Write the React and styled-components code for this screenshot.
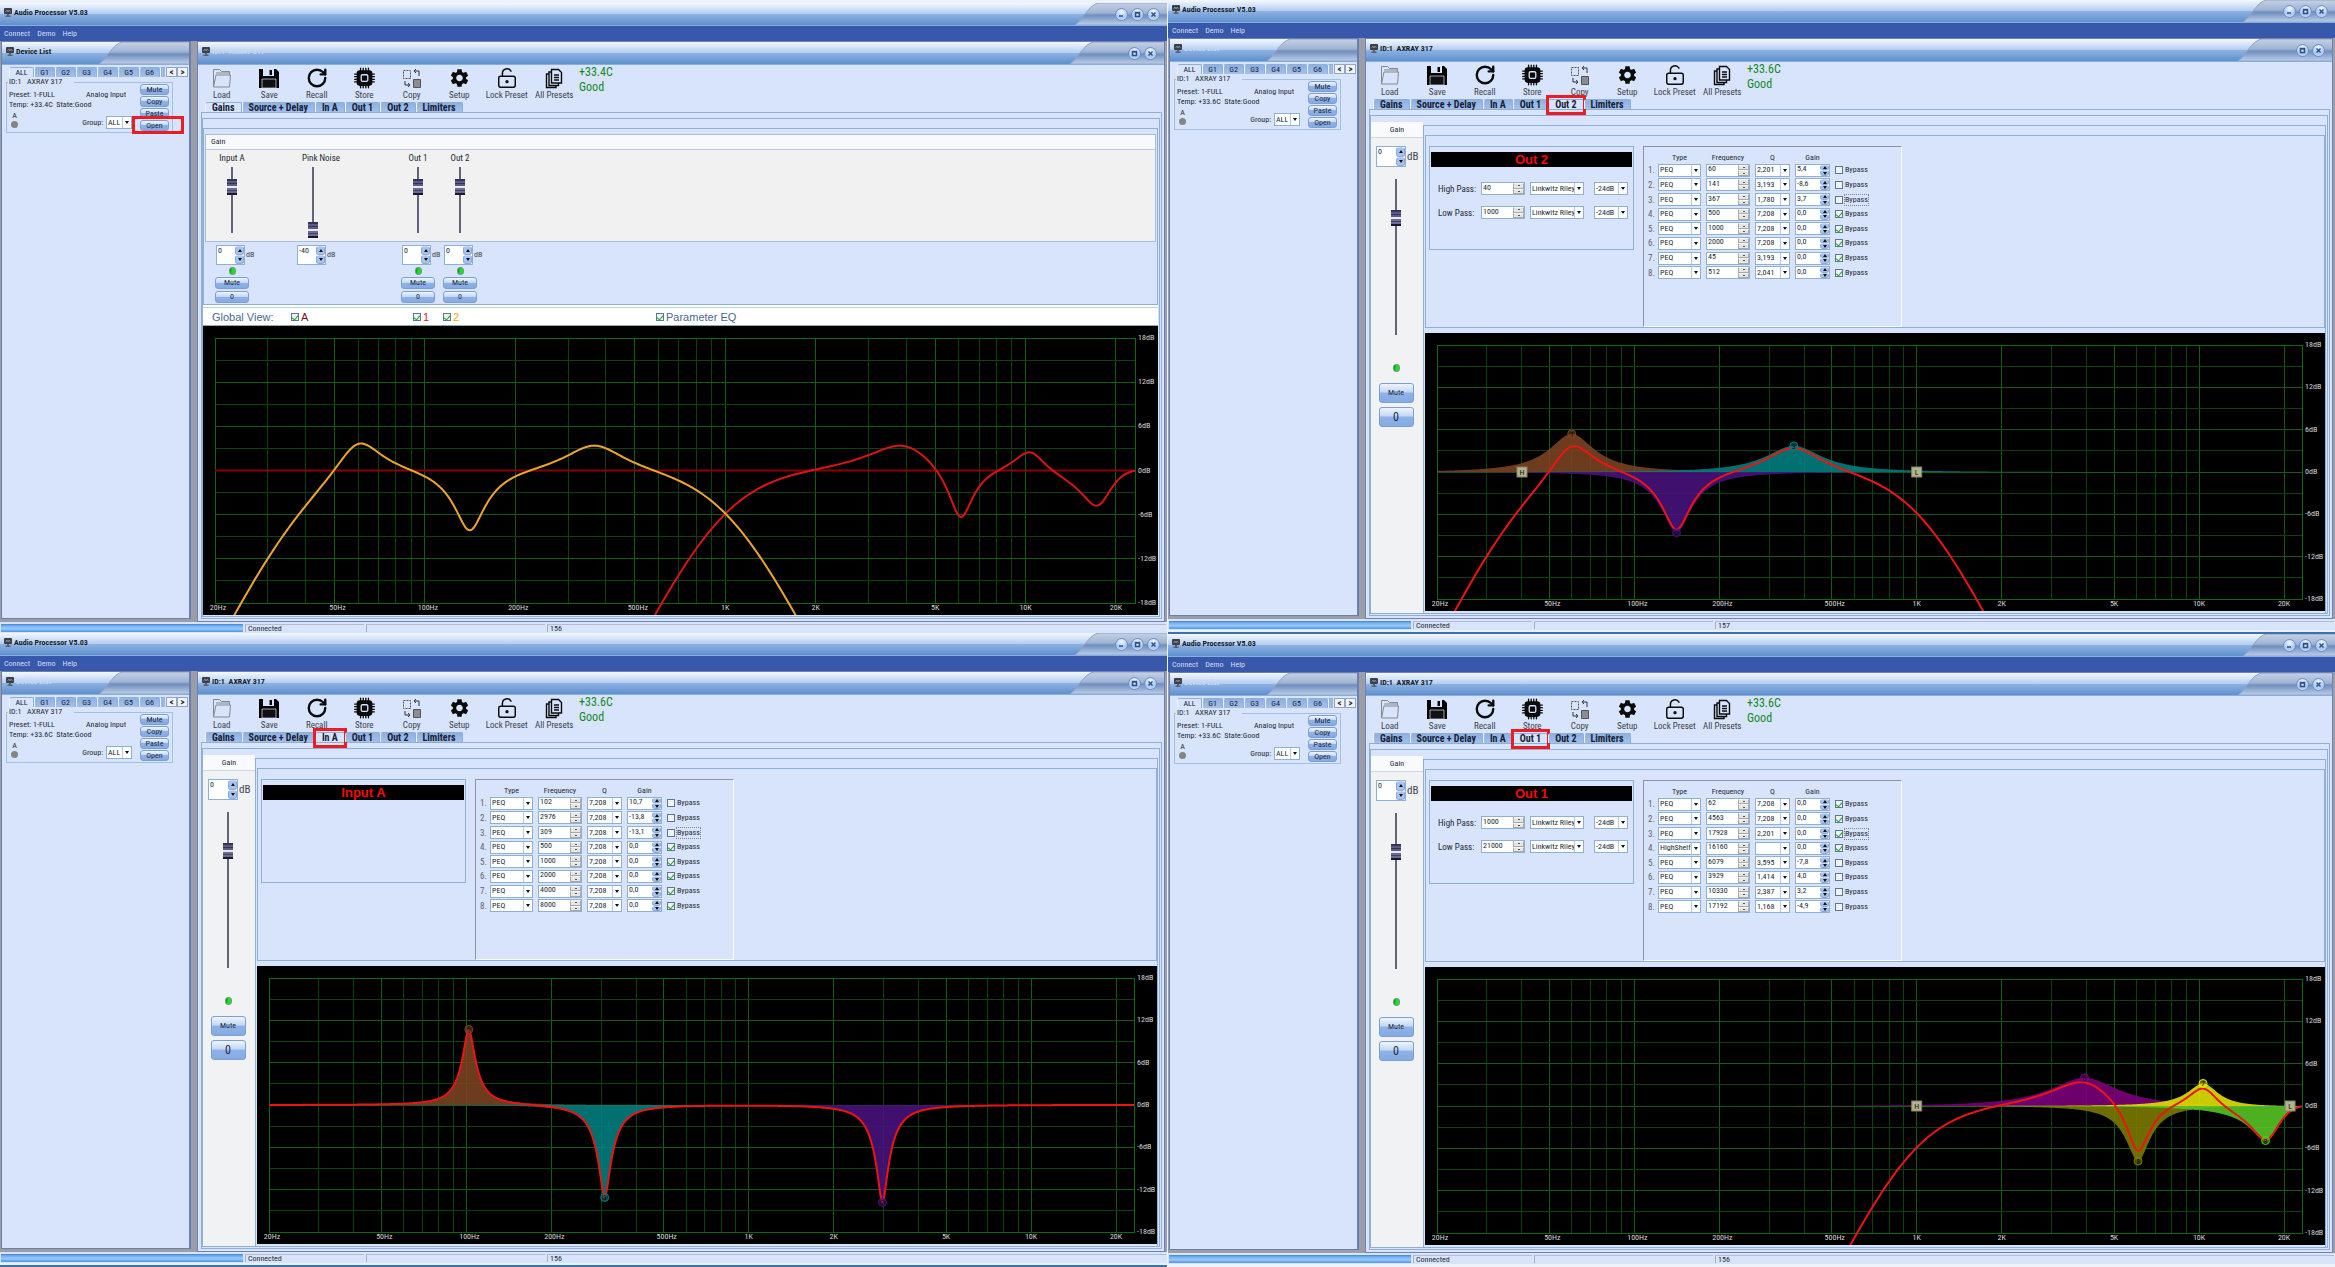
import React from 'react';
import styled, { createGlobalStyle, css } from 'styled-components';
import { LockKeyholeOpen, RotateCw } from 'lucide-react';
import { BsCpuFill } from 'react-icons/bs';
import { MdSettings } from 'react-icons/md';

const GlobalStyle = createGlobalStyle`
  * {
    box-sizing: border-box;
  }

  body {
    margin: 0;
    background: #eef3fb;
    color: #232a35;
    font-family: 'Roboto Condensed', Roboto, 'Liberation Sans', sans-serif;
    font-size: 8px;
    line-height: 10px;
  }

  button,
  input,
  select {
    margin: 0;
    padding: 0;
    color: inherit;
    font: inherit;
  }
`;

const line = '#8fb0d2';
const panel = '#d8e4fb';

/* ---------- window chrome ---------- */

const StyledDesk = styled.main`
  display: grid;
  grid-template-columns: minmax(0, 1fr) minmax(0, 1fr);
  gap: 1px;
`;
const StyledColumn = styled.div`
  padding-top: ${({ $top }) => $top}px;
`;
const StyledWindow = styled.section`
  background: #d3dff6;
`;
const StyledSeam = styled.div`
  height: 4px;
  border-bottom: 2px solid #3f6fae;
  background: #e9f1fb;
`;
const StyledCaption = styled.header`
  display: flex;
  align-items: center;
  height: 23px;
  padding-left: 4px;
  overflow: hidden;
  border-bottom: 1px solid #88aee0;
  background: linear-gradient(#f3f8fe 0%, #dbe8f9 20%, #b4cdf0 48%, #8db1e2 52%, #5f90cd 100%);

  h1,
  h2 {
    flex: 1;
    margin: 0 0 3px 2px;
    color: ${({ $faded }) => ($faded ? '#c6d7ef' : '#141c28')};
    font-size: 8px;
    font-weight: bold;
    white-space: pre;
  }
  > svg {
    flex: none;
    margin-bottom: 4px;
  }
`;
const StyledTail = styled.div`
  display: grid;
  flex: none;
  width: ${({ $width }) => $width}px;
  height: 22px;

  > * {
    grid-area: 1 / 1;
  }
`;
const StyledCaptionButtons = styled.div`
  display: flex;
  align-items: center;
  justify-content: flex-end;
  gap: 3px;
  padding-right: 7px;
`;
const StyledOrb = styled.button`
  display: flex;
  width: 13px;
  height: 13px;
  border: 1px solid #6e8fc8;
  border-radius: 50%;
  background: radial-gradient(circle at 50% 25%, #f2f8ff, #a9c8f2 60%, #d5e6fb);
`;
const StyledMenu = styled.nav`
  display: flex;
  align-items: center;
  gap: 7px;
  height: 15px;
  padding-left: 4px;
  background: #3859ab;

  a {
    color: #d3dbf1;
    font-size: 8px;
    text-decoration: none;
  }
`;
const StyledBody = styled.div`
  display: flex;
  gap: 6px;
  height: 581px;
  padding: 0 2px 0 1px;
  background: #9b9ea6;
`;
const StyledDeviceList = styled.aside`
  flex: 0 0 190px;
  height: 578px;
  border: 1px solid #6b7fae;
  border-right-width: 2px;
  background: ${panel};
`;
const StyledChild = styled.section`
  display: flex;
  flex: 1;
  flex-direction: column;
  min-width: 0;
  border: 1px solid #6f80bd;
  background: ${panel};
`;
const StyledStatus = styled.footer`
  display: flex;
  gap: 2px;
  height: 11px;
  padding: 2px 1px 1px;
  background: ${panel};

  span {
    padding-left: 2px;
    border-top: 1px solid #b6bdca;
    border-left: 1px solid #a9b1c0;
    line-height: 8px;
  }
  span:nth-of-type(1) {
    width: 119px;
  }
  span:nth-of-type(2) {
    width: 179px;
  }
  span:nth-of-type(3) {
    flex: 1;
  }
`;
const StyledProgress = styled.div`
  width: 242px;
  background: linear-gradient(#4a80c8 0%, #6fb2f4 25%, #9acbfb 60%, #4b92e6 100%);
`;

/* ---------- shared controls ---------- */

const StyledButton = styled.button`
  display: block;
  width: ${({ $width }) => $width}px;
  height: ${({ $height }) => $height}px;
  border: 1px solid #7d9fd6;
  border-radius: 3px;
  background: linear-gradient(#eef5fe, #c2d8f6 45%, #8fb2e6 50%, #85abe2 100%);
  color: #1d2a45;
  font-size: ${({ $big }) => ($big ? 12 : 8)}px;
  line-height: 1;
`;
const StyledTabs = styled.div`
  display: flex;
  align-items: flex-end;
  height: ${({ $height }) => $height}px;
  padding-left: 7px;
`;
const StyledTabSlot = styled.div`
  position: relative;
`;
const StyledTab = styled.button`
  display: block;
  height: 10px;
  padding: 0 6px;
  border: 1px solid ${line};
  border-bottom: 0;
  border-left-color: #eaf2fd;
  border-radius: 3px 2px 0 0;
  background: ${({ $active }) => ($active ? panel : 'linear-gradient(#8db0e2, #a4c0ea)')};
  color: #152036;
  font-size: ${({ $small }) => ($small ? 8 : 10)}px;
  font-weight: ${({ $small }) => ($small ? 'normal' : 'bold')};
  line-height: 9px;
  white-space: nowrap;

  ${({ $small, $active }) =>
    $small &&
    css`
      width: ${$active ? 25 : 21}px;
      padding: 0;
    `}
`;
const StyledTabStub = styled.i`
  width: 5px;
  height: 10px;
  border-top: 1px solid ${line};
  border-left: 1px solid #eaf2fd;
  background: #98b8e6;
`;
const StyledMark = styled.span`
  position: absolute;
  inset: ${({ $inset }) => $inset};
  border: 3px solid #ed1c24;
  pointer-events: none;
`;
const StyledSelect = styled.span`
  display: flex;
  width: ${({ $width }) => $width}px;
  height: 13px;
  border: 1px solid ${line};
  background: #fff;

  select {
    flex: 1;
    min-width: 0;
    padding-left: 1px;
    border: 0;
    background: none;
    appearance: none;
  }
`;
const StyledArrowCell = styled.span`
  display: flex;
  flex: none;
  align-items: center;
  justify-content: center;
  width: 9px;
  border-left: 1px solid #b5cbe2;
  font-size: 0;
`;
const StyledTriangle = styled.i`
  border: 2px solid transparent;
  border-top: ${({ $up }) => ($up ? 0 : '3px solid #111')};
  border-bottom: ${({ $up }) => ($up ? '3px solid #111' : 0)};
`;
const StyledSpin = styled.span`
  display: flex;
  width: ${({ $width }) => $width}px;
  height: ${({ $height }) => $height}px;
  border: 1px solid ${line};
  background: #fff;

  input {
    flex: 1;
    min-width: 0;
    height: 9px;
    padding-left: 1px;
    border: 0;
    outline: 0;
    background: none;
  }
`;
const StyledSteps = styled.span`
  display: flex;
  flex: none;
  flex-direction: column;
  width: ${({ $grey }) => ($grey ? 11 : 9)}px;

  button {
    display: flex;
    flex: 1;
    align-items: center;
    justify-content: center;
    min-height: 0;
    border: 1px solid ${({ $grey }) => ($grey ? '#a8a8a8' : '#8aaadb')};
    border-top-color: ${({ $grey }) => ($grey ? '#f6f6f6' : '#c4d8f4')};
    border-radius: ${({ $grey }) => ($grey ? 0 : 3)}px;
    background: ${({ $grey }) => ($grey ? '#e6e6e4' : '#a9c5ef')};
    overflow: hidden;
  }
  i {
    ${({ $grey }) =>
      $grey &&
      css`
        border-width: 1px;
        border-color: #555;
      `}
  }
`;
const StyledCheck = styled.label`
  display: flex;
  align-items: center;
  gap: 2px;
  color: ${({ $color }) => $color || 'inherit'};
  font-family: ${({ $big }) => ($big ? "'Liberation Sans', sans-serif" : 'inherit')};
  font-size: ${({ $big }) => ($big ? 11 : 8)}px;

  span {
    outline: ${({ $focus }) => ($focus ? '1px dotted #7c8698' : 'none')};
  }
  input {
    display: flex;
    align-items: center;
    justify-content: center;
    width: 8px;
    height: 8px;
    border: 1px solid #55789e;
    background: #f3f4f1;
    appearance: none;
  }
  input:checked::after {
    content: '';
    width: 3px;
    height: 5px;
    border: solid #21a121;
    border-width: 0 1px 1px 0;
    transform: rotate(40deg);
  }
`;
const StyledFader = styled.input`
  width: 10px;
  height: ${({ $height }) => $height}px;
  background: linear-gradient(#646478, #646478) center top / 2px calc(100% - 5px) no-repeat;
  appearance: none;
  direction: rtl;
  writing-mode: vertical-lr;

  &::-webkit-slider-runnable-track {
    width: 10px;
    background: none;
  }
  &::-webkit-slider-thumb {
    width: 10px;
    height: 16px;
    background: linear-gradient(
      #34345a 0 2px,
      #5c5c84 2px 4px,
      #34345a 4px 5px,
      #5c5c84 5px 7px,
      #e8e8f0 7px 9px,
      #6c6c90 9px 11px,
      #43436a 11px 12px,
      #6c6c90 12px 14px,
      #17172e 14px 16px
    );
    appearance: none;
  }
`;
const StyledLed = styled.i`
  width: 7px;
  height: 8px;
  border: 1px solid #7f957f;
  border-radius: 3px;
  background: linear-gradient(100deg, #0c7a1a, #14e428 45%);
`;

/* ---------- device list ---------- */

const StyledArrows = styled.div`
  display: flex;
  margin: 0 1px 0 auto;

  button {
    width: 11px;
    height: 10px;
    border: 1px solid #93a5c2;
    background: #f1f3f7;
    font-size: 9px;
    font-weight: bold;
    line-height: 6px;
  }
`;
const StyledDevice = styled.fieldset`
  display: block;
  width: 167px;
  margin: 3px 0 0 4px;
  padding: 0;
  border: 1px solid #a3c0df;

  legend {
    margin-left: 1px;
    padding: 0 12px 0 1px;
    line-height: 4px;
    white-space: pre;
  }
`;
const StyledDeviceGrid = styled.div`
  display: grid;
  grid-template-columns: 1fr 29px;
  column-gap: 14px;
  height: 48px;
  padding: 0 3px 0 2px;
`;
const StyledDeviceInfo = styled.div`
  padding-top: 6px;
  white-space: nowrap;
`;
const StyledSpread = styled.div`
  display: flex;
  justify-content: space-between;
`;
const StyledGroupRow = styled.div`
  display: flex;
  align-items: flex-start;
  justify-content: space-between;
  margin-right: -6px;

  label {
    display: flex;
    align-items: center;
    gap: 3px;
    padding-top: 6px;
  }
`;
const StyledInput = styled.span`
  display: flex;
  flex-direction: column;
  align-items: center;
  padding: 1px 0 0 2px;

  i {
    width: 7px;
    height: 7px;
    border-radius: 50%;
    background: #858585;
  }
`;
const StyledDeviceButtons = styled.div`
  display: flex;
  flex-direction: column;
  gap: 1px;
`;

/* ---------- main panel ---------- */

const StyledToolbar = styled.div`
  display: flex;
  height: 38px;
`;
const StyledTools = styled.div`
  display: grid;
  grid-template-columns: repeat(8, minmax(0, 1fr));
  width: 380px;
`;
const StyledTool = styled.button`
  display: flex;
  flex-direction: column;
  align-items: center;
  padding-top: 2px;
  border: 0;
  background: none;
  color: #3b414b;
  font-size: 9px;
  line-height: 12px;
  white-space: nowrap;

  svg {
    flex: none;
    height: 22px;
    color: #0b0b0b;
  }
`;
const StyledHealth = styled.div`
  padding-left: 1px;
  color: #128a1e;
  font-size: 12px;
  line-height: 15px;
`;
const StyledOuterFrame = styled.div`
  flex: 1;
  margin: 0 2px 2px 3px;
  padding: 5px 1px 1px 0;
  border: 1px solid ${line};
`;
const StyledInnerFrame = styled.div`
  height: 100%;
  padding-right: 1px;
  border: 1px solid ${line};
`;
const StyledGainBoard = styled.div`
  height: 177px;
  margin-top: 9px;
  padding: 5px 1px 0;
  border: 1px solid ${line};
`;
const StyledFaderBed = styled.div`
  height: 108px;
  border: 1px solid #a8bdd8;
  background: #f1f1f1;

  h3 {
    height: 15px;
    margin: 0;
    padding-left: 5px;
    border-bottom: 1px solid #bccbe0;
    background: #f7f9fc;
    font-size: 8px;
    font-weight: normal;
    line-height: 14px;
  }
`;
const StyledStrips = styled.div`
  display: grid;
  grid-template-columns: 42px 39px 42px 63px 42px 42px;
  padding: ${({ $pad }) => $pad};
`;
const StyledStrip = styled.div`
  display: flex;
  grid-column: ${({ $column }) => $column};
  flex-direction: column;
  align-items: center;
`;
const StyledStripLabel = styled.label`
  width: ${({ $width }) => $width}px;
  height: 14px;
  align-self: flex-start;
  font-size: 9px;
  text-align: center;
`;
const StyledLevel = styled.label`
  display: flex;
  align-items: center;
  align-self: stretch;
  gap: 1px;
  padding-left: 5px;

  > em {
    color: #3f4650;
    font-size: ${({ $big }) => ($big ? 11 : 8)}px;
    font-style: normal;
  }
`;
const StyledLedRow = styled.div`
  display: flex;
  align-items: center;
  height: 12px;
`;
const StyledMuteStack = styled.div`
  display: flex;
  flex-direction: column;
  gap: 2px;
`;
const StyledViewBar = styled.div`
  display: grid;
  grid-template-columns: 79px 122px 30px 213px auto;
  align-items: center;
  height: 21px;
  padding: 3px 0 0 9px;
  border-bottom: 1px solid #94a8b8;
  background: linear-gradient(#fff 2px, #b9d2e4 2px 3px, #fff 3px);
  color: #4a6890;
  font-family: 'Liberation Sans', sans-serif;
  font-size: 11px;
`;
const StyledChannel = styled.div`
  display: flex;
  height: 100%;
`;
const StyledGainColumn = styled.div`
  display: flex;
  flex: 0 0 52px;
  flex-direction: column;
  align-items: center;
  margin-top: 6px;
  padding-right: 2px;
  background: #f1f2f4;

  h3 {
    align-self: stretch;
    height: 16px;
    margin: 0 -2px 8px 0;
    border-bottom: 1px solid #ccd6e4;
    background: #f9fafd;
    font-size: 8px;
    font-weight: normal;
    line-height: 15px;
    text-align: center;
  }
`;
const StyledGainButtons = styled.div`
  display: flex;
  flex-direction: column;
  gap: 4px;
  padding-top: 11px;
`;
const StyledEqSide = styled.div`
  display: flex;
  flex: 1;
  flex-direction: column;
  min-width: 0;
  margin-top: 9px;
  padding: 9px 0 0 1px;
  border: 1px solid ${line};
  border-bottom: 0;
`;
const StyledEqFrame = styled.div`
  display: flex;
  align-items: flex-start;
  gap: 9px;
  height: 193px;
  margin-bottom: 5px;
  padding: 10px 3px 0;
  border: 1px solid ${line};
`;
const StyledFilterBox = styled.div`
  width: 205px;
  height: 104px;
  padding: 5px 1px;
  border: 1px solid ${line};

  h3 {
    margin: 0 0 15px;
    background: #000;
    color: #f50808;
    font-family: 'Liberation Sans', sans-serif;
    font-size: 13px;
    font-weight: bold;
    line-height: 15px;
    text-align: center;
  }
`;
const StyledFilterRow = styled.div`
  display: grid;
  grid-template-columns: 43px 49px 64px 34px;
  align-items: center;
  margin-bottom: 11px;
  padding-left: 7px;
  font-size: 9px;
  white-space: nowrap;

  > span {
    font-size: 8px;
  }
`;
const StyledBandBox = styled.div`
  width: 259px;
  height: 181px;
  padding: 5px 0 0 4px;
  border: 1px solid #fbfcfe;
  border-top-color: #8b94a3;
  border-left-color: #8b94a3;
`;
const StyledBands = styled.table`
  height: 128px;
  border-collapse: collapse;

  th {
    height: 11px;
    font-weight: normal;
  }
  td,
  th {
    padding: 0 5px 0 0;
  }
  td:first-child {
    width: 10px;
    padding: 0;
    color: #5b6472;
    font-size: 9px;
  }
`;

/* ---------- chart ---------- */

const StyledChart = styled.div`
  height: ${({ $height }) => $height}px;
  padding: 12px 23px 12px 12px;
  overflow: hidden;
  background: #000;

  svg {
    display: block;
    overflow: visible;
  }
  text {
    fill: #d8d8d8;
    font-size: 8px;
  }
  .tag {
    fill: #101010;
    text-anchor: middle;
  }
`;

const SAMPLE_RATE = 48000;
const F_MIN = 20;
const F_MAX = 23150;
const SPAN = Math.log10(F_MAX / F_MIN);

const toX = f => Math.log10(f / F_MIN) / SPAN;
const pctX = f => `${(toX(f) * 100).toFixed(3)}%`;
const pctY = db => `${((18 - db) / 36) * 100}%`;
const warp = f => Math.tan((Math.PI * f) / SAMPLE_RATE);

const peak = ({ freq, q, gain }) => f => {
  const ratio = warp(f) / warp(freq);
  const a = 10 ** (gain / 40);
  const w = (ratio - 1 / ratio) ** 2;
  return 10 * Math.log10((w + (a / q) ** 2) / (w + (1 / (a * q)) ** 2));
};

// Linkwitz-Riley, 24 dB per octave
const highPass = cut => f => -20 * Math.log10(1 + (cut / f) ** 4);
const lowPass = cut => f => -20 * Math.log10(1 + (f / cut) ** 4);

const STEPS = 900;
const frequencies = Array.from({ length: STEPS + 1 }, (_, i) => F_MIN * 10 ** ((SPAN * i) / STEPS));

const tracePath = parts =>
  frequencies
    .map((f, i) => {
      const db = parts.reduce((sum, part) => sum + part(f), 0);
      const y = 180 - Math.max(db, -60) * 10;
      return `${i ? 'L' : 'M'}${((i / STEPS) * 1000).toFixed(2)} ${y.toFixed(2)}`;
    })
    .join('');

const gridFrequencies = [10, 100, 1000, 10000]
  .flatMap(decade => [1, 2, 3, 4, 5, 6, 7, 8, 9].map(n => n * decade))
  .filter(f => f >= F_MIN && f <= 20000);
const namedFrequencies = [
  [20, '20Hz'],
  [50, '50Hz'],
  [100, '100Hz'],
  [200, '200Hz'],
  [500, '500Hz'],
  [1000, '1K'],
  [2000, '2K'],
  [5000, '5K'],
  [10000, '10K'],
  [20000, '20K'],
];
const levels = [18, 15, 12, 9, 6, 3, 0, -3, -6, -9, -12, -15, -18];

const Chart = ({ height, traces, fills = [], cuts = [] }) => (
  <StyledChart $height={height}>
    <svg width="100%" height="100%">
      <g shapeRendering="crispEdges">
        {gridFrequencies.map(f => (
          <line key={f} x1={pctX(f)} x2={pctX(f)} y1="0" y2="100%" stroke={namedFrequencies.some(([n]) => n === f) ? '#145c18' : '#0e4010'} />
        ))}
        {levels.map(db => (
          <line key={db} x1="0" x2="100%" y1={pctY(db)} y2={pctY(db)} stroke={db % 6 ? '#0f4212' : '#145c18'} />
        ))}
        <rect width="100%" height="100%" fill="none" stroke="#0c6a12" />
      </g>
      <svg viewBox="0 0 1000 360" width="100%" height="100%" preserveAspectRatio="none">
        {fills.map(({ band, color }) => (
          <path key={band.id} d={`${tracePath([peak(band)])}L1000 180L0 180Z`} fill={color} fillOpacity="0.88" />
        ))}
        {traces.map(({ parts, color, width = 2 }) => (
          <path key={color} d={tracePath(parts)} fill="none" stroke={color} strokeWidth={width} vectorEffect="non-scaling-stroke" />
        ))}
      </svg>
      {fills.map(({ band, color }) => (
        <g key={band.id}>
          <circle cx={pctX(band.freq)} cy={pctY(band.gain)} r="4" fill={color} fillOpacity="0.5" stroke={color} />
          <text className="tag" x={pctX(band.freq)} y={pctY(band.gain)} dy="3">
            {band.id}
          </text>
        </g>
      ))}
      {cuts.map(([f, name]) => (
        <g key={name}>
          <svg x={pctX(f)} y="50%">
            <rect x="-5" y="-5" width="10" height="10" fill="#b4b48c" stroke="#84846a" />
          </svg>
          <text className="tag" x={pctX(f)} y="50%" dy="3">
            {name}
          </text>
        </g>
      ))}
      {namedFrequencies.map(([f, name]) => (
        <text key={name} x={pctX(f)} y="100%" dx={f < 1000 ? 3 : 0} dy="7" textAnchor="middle">
          {name}
        </text>
      ))}
      {levels
        .filter(db => db % 6 === 0)
        .map(db => (
          <text key={db} x="100%" y={pctY(db)} dx="3" dy="2">
            {db}dB
          </text>
        ))}
    </svg>
  </StyledChart>
);

/* ---------- data ---------- */

const makeBands = rows =>
  rows.map(([freq, q, gain, bypass, type = 'PEQ'], i) => ({ id: i + 1, type, freq, q, gain, bypass }));

const inputA = {
  name: 'Input A',
  bands: makeBands([
    [102, 7.208, 10.7, false],
    [2976, 7.208, -13.8, false],
    [309, 7.208, -13.1, false],
    [500, 7.208, 0, true],
    [1000, 7.208, 0, true],
    [2000, 7.208, 0, true],
    [4000, 7.208, 0, true],
    [8000, 7.208, 0, true],
  ]),
};
const out1 = {
  name: 'Out 1',
  high: 1000,
  low: 21000,
  bands: makeBands([
    [62, 7.208, 0, true],
    [4563, 7.208, 0, true],
    [17928, 2.201, 0, true],
    [16160, null, 0, true, 'HighShelf'],
    [6079, 3.595, -7.8, false],
    [3929, 1.414, 4, false],
    [10330, 2.387, 3.2, false],
    [17192, 1.168, -4.9, false],
  ]),
};
const out2 = {
  name: 'Out 2',
  high: 40,
  low: 1000,
  bands: makeBands([
    [60, 2.201, 5.4, false],
    [141, 3.193, -8.6, false],
    [367, 1.78, 3.7, false],
    [500, 7.208, 0, true],
    [1000, 7.208, 0, true],
    [2000, 7.208, 0, true],
    [45, 3.193, 0, true],
    [512, 2.041, 0, true],
  ]),
};

const bandColors = ['', '#7c4322', '#48127c', '#008080', '', '#7c7c00', '#7c007c', '#e6e600', '#56c824'];
const activeBands = channel => channel.bands.filter(band => !band.bypass);

// above 20 kHz the low pass is out of circuit
const channelParts = channel => [
  ...(channel.high ? [highPass(channel.high)] : []),
  ...(channel.low && channel.low < 20000 ? [lowPass(channel.low)] : []),
  ...activeBands(channel).map(peak),
];

/* ---------- small parts ---------- */

const AppIcon = () => (
  <svg width="8" height="9" viewBox="0 0 8 9">
    <rect width="8" height="6" rx="1" fill="#3a3f48" />
    <path d="M1.500 4 3 2l1 2 1-2 1.500 2" fill="none" stroke="#9aa4b2" strokeWidth="0.700" />
    <path d="M3 6h2v1.500h1.500V9h-5V7.500H3z" fill="#5c626d" />
  </svg>
);

const Tail = ({ width, children }) => (
  <StyledTail $width={width}>
    <svg width={width} height="22">
      <defs>
        <linearGradient id="tail" x1="0" y1="0" x2="0" y2="1">
          <stop offset="0" stopColor="#c6d2e4" />
          <stop offset="0.45" stopColor="#9fb4d4" />
          <stop offset="0.55" stopColor="#6f8ebe" />
          <stop offset="1" stopColor="#bccfe8" />
        </linearGradient>
      </defs>
      <path d="M0 22C7 18 14 1 24 0H200V22Z" fill="url(#tail)" stroke="#8ca4c8" />
    </svg>
    <StyledCaptionButtons>{children}</StyledCaptionButtons>
  </StyledTail>
);

const orbPaths = { Minimize: 'M3 7h4', Maximize: 'M3.500 3.500h4v4h-4zM3.500 4h4', Close: 'M3.500 3.500l4 4M7.500 3.500l-4 4' };
const Orb = ({ name }) => (
  <StyledOrb aria-label={name}>
    <svg width="11" height="11">
      <path d={orbPaths[name]} fill="none" stroke="#2f4f85" strokeWidth="1.500" />
    </svg>
  </StyledOrb>
);

const Select = ({ label, width, value }) => (
  <StyledSelect $width={width}>
    <select aria-label={label} defaultValue={value}>
      <option>{value}</option>
    </select>
    <StyledArrowCell>
      <StyledTriangle />
    </StyledArrowCell>
  </StyledSelect>
);

const Spin = ({ label, width, height, value, grey }) => (
  <StyledSpin $width={width} $height={height}>
    <input type="text" aria-label={label} defaultValue={value} />
    <StyledSteps $grey={grey}>
      <button aria-label={`${label} up`}>
        <StyledTriangle $up />
      </button>
      <button aria-label={`${label} down`}>
        <StyledTriangle />
      </button>
    </StyledSteps>
  </StyledSpin>
);

const Check = ({ children, checked, ...rest }) => (
  <StyledCheck {...rest}>
    <input type="checkbox" defaultChecked={checked} />
    <span>{children}</span>
  </StyledCheck>
);

const stroke = { fill: 'none', stroke: 'currentColor' };

const tools = [
  [
    'Load',
    <svg width="20" height="22" viewBox="0 0 20 22" {...stroke}>
      <path d="M1.500 20V2.500h6l2 2h8V8M1.500 20 4 8h14.500L17.500 20zM4 6h13" stroke="#85888e" />
    </svg>,
  ],
  [
    'Save',
    <svg width="20" height="22" viewBox="0 0 20 22">
      <path d="M0 2h17l3 3v16H0z" />
      <path d="M4 2h11v7H4z" fill={panel} />
      <path d="M10.500 3H13v5h-2.500z" />
      <path d="M3 12h14v9H3z" fill="#111" stroke={panel} strokeWidth="0.700" />
    </svg>,
  ],
  ['Recall', <RotateCw size={22} strokeWidth={2.6} />],
  ['Store', <BsCpuFill size={21} />],
  [
    'Copy',
    <svg width="20" height="22" viewBox="0 0 20 22" {...stroke}>
      <path d="M1.500 3.500h7v8h-7z" strokeDasharray="2 1" stroke="#555" />
      <path d="M11.500 12.500h7v8h-7z" fill="#8b8d92" stroke="#555" />
      <path d="M12 4h5v5M14 2l-2 2 2 2M8 18H3v-4M6 16l2 2-2 2" stroke="#333" />
    </svg>,
  ],
  ['Setup', <MdSettings size={23} />],
  ['Lock Preset', <LockKeyholeOpen size={22} strokeWidth={1.6} />],
  [
    'All Presets',
    <svg width="18" height="22" viewBox="0 0 18 22" {...stroke} strokeWidth="1.400">
      <path d="M6.500 2.500h7l3 3V16h-10zM6 5H4v13.500h9.500V16M4 7H1.500v13.500H11v-2M9 8h5M9 10.500h5M9 13h5" />
    </svg>,
  ],
];

const DeviceList = ({ current, temp, marked }) => (
  <StyledDeviceList>
    <StyledCaption $faded={!current}>
      <AppIcon />
      <h2>Device List</h2>
      <Tail width={90} />
    </StyledCaption>
    <StyledTabs $height={12}>
      {['ALL', 'G1', 'G2', 'G3', 'G4', 'G5', 'G6'].map((name, i) => (
        <StyledTab key={name} $small $active={i === 0}>
          {name}
        </StyledTab>
      ))}
      <StyledTabStub />
      <StyledArrows>
        <button aria-label="Previous groups">&lt;</button>
        <button aria-label="Next groups">&gt;</button>
      </StyledArrows>
    </StyledTabs>
    <StyledDevice>
      <legend>{'ID:1   AXRAY 317'}</legend>
      <StyledDeviceGrid>
        <StyledDeviceInfo>
          <StyledSpread>
            <span>Preset: 1-FULL</span>
            <span>Analog Input</span>
          </StyledSpread>
          <div>Temp: {temp}&nbsp; State:Good</div>
          <StyledGroupRow>
            <StyledInput>
              A<i />
            </StyledInput>
            <label>
              Group:
              <Select label="Group" width={26} value="ALL" />
            </label>
          </StyledGroupRow>
        </StyledDeviceInfo>
        <StyledDeviceButtons>
          {['Mute', 'Copy', 'Paste', 'Open'].map(name => (
            <StyledTabSlot key={name}>
              <StyledButton $width={29} $height={11}>
                {name}
              </StyledButton>
              {marked && name === 'Open' && <StyledMark $inset="-4px -15px -3px -8px" />}
            </StyledTabSlot>
          ))}
        </StyledDeviceButtons>
      </StyledDeviceGrid>
    </StyledDevice>
  </StyledDeviceList>
);

const AppWindow = ({ tab, temp, count, markTab, children }) => (
  <StyledWindow>
    <StyledCaption>
      <AppIcon />
      <h1>Audio Processor V5.03</h1>
      <Tail width={92}>
        <Orb name="Minimize" />
        <Orb name="Maximize" />
        <Orb name="Close" />
      </Tail>
    </StyledCaption>
    <StyledMenu>
      <a href="#connect">Connect</a>
      <a href="#demo">Demo</a>
      <a href="#help">Help</a>
    </StyledMenu>
    <StyledBody>
      <DeviceList current={!markTab} marked={!markTab} temp={temp} />
      <StyledChild>
        <StyledCaption $faded={!markTab}>
          <AppIcon />
          <h2>{'ID:1  AXRAY 317'}</h2>
          <Tail width={94}>
            <Orb name="Maximize" />
            <Orb name="Close" />
          </Tail>
        </StyledCaption>
        <StyledToolbar>
          <StyledTools>
            {tools.map(([name, icon]) => (
              <StyledTool key={name}>
                {icon}
                {name}
              </StyledTool>
            ))}
          </StyledTools>
          <StyledHealth>
            <div>{temp}</div>
            <div>Good</div>
          </StyledHealth>
        </StyledToolbar>
        <StyledTabs $height={9}>
          {['Gains', 'Source + Delay', 'In A', 'Out 1', 'Out 2', 'Limiters'].map(name => (
            <StyledTabSlot key={name}>
              <StyledTab $active={name === tab}>{name}</StyledTab>
              {markTab && name === tab && <StyledMark $inset="-4px -2px -6px" />}
            </StyledTabSlot>
          ))}
        </StyledTabs>
        <StyledOuterFrame>
          <StyledInnerFrame>{children}</StyledInnerFrame>
        </StyledOuterFrame>
      </StyledChild>
    </StyledBody>
    <StyledStatus>
      <StyledProgress />
      <span>Connected</span>
      <span />
      <span>{count}</span>
    </StyledStatus>
  </StyledWindow>
);

const strips = [
  { name: 'Input A', column: 1, level: 0, mute: true },
  { name: 'Pink Noise', column: 3, level: -40, labelWidth: 58 },
  { name: 'Out 1', column: 5, level: 0, mute: true },
  { name: 'Out 2', column: 6, level: 0, mute: true },
];

const Gains = () => (
  <>
    <StyledGainBoard>
      <StyledFaderBed>
        <h3>Gain</h3>
        <StyledStrips $pad="3px 0 0 5px">
          {strips.map(({ name, column, level, labelWidth = 42 }) => (
            <StyledStrip key={name} $column={column}>
              <StyledStripLabel htmlFor={`fader-${column}`} $width={labelWidth}>
                {name}
              </StyledStripLabel>
              <StyledFader id={`fader-${column}`} type="range" min="-40" max="11" defaultValue={level} $height={71} />
            </StyledStrip>
          ))}
        </StyledStrips>
      </StyledFaderBed>
      <StyledStrips $pad="3px 0 0 6px">
        {strips.map(({ name, column, level, mute }) => (
          <StyledStrip key={name} $column={column}>
            <StyledLevel>
              <Spin label={`${name} gain`} width={29} height={20} value={level} />
              <em>dB</em>
            </StyledLevel>
            {mute && (
              <>
                <StyledLedRow>
                  <StyledLed />
                </StyledLedRow>
                <StyledMuteStack>
                  <StyledButton $width={34} $height={12}>
                    Mute
                  </StyledButton>
                  <StyledButton $width={34} $height={12}>
                    0
                  </StyledButton>
                </StyledMuteStack>
              </>
            )}
          </StyledStrip>
        ))}
      </StyledStrips>
    </StyledGainBoard>
    <StyledViewBar>
      <span>Global View:</span>
      <Check $big $color="#7a1010" checked>
        A
      </Check>
      <Check $big $color="#e02020" checked>
        1
      </Check>
      <Check $big $color="#e8a820" checked>
        2
      </Check>
      <Check $big checked>
        Parameter EQ
      </Check>
    </StyledViewBar>
    <Chart
      height={289}
      traces={[
        { parts: [], color: '#8b0000' },
        { parts: channelParts(out1), color: '#d81414' },
        { parts: channelParts(out2), color: '#eda52e' },
      ]}
    />
  </>
);

const comma = (n, digits) => n.toFixed(digits).replace('.', ',');

const Channel = ({ channel }) => (
  <StyledChannel>
    <StyledGainColumn>
      <h3>Gain</h3>
      <StyledLevel $big>
        <Spin label={`${channel.name} gain`} width={30} height={21} value="0" />
        <em>dB</em>
      </StyledLevel>
      <StyledLedRow />
      <StyledFader aria-label={`${channel.name} fader`} type="range" min="-40" max="11" defaultValue="0" $height={161} />
      <StyledLedRow />
      <StyledLedRow />
      <StyledLed />
      <StyledGainButtons>
        <StyledButton $width={35} $height={20}>
          Mute
        </StyledButton>
        <StyledButton $width={35} $height={20} $big>
          0
        </StyledButton>
      </StyledGainButtons>
    </StyledGainColumn>
    <StyledEqSide>
      <StyledEqFrame>
        <StyledFilterBox>
          <h3>{channel.name}</h3>
          {channel.high &&
            [
              ['High Pass', channel.high],
              ['Low Pass', channel.low],
            ].map(([name, freq]) => (
              <StyledFilterRow key={name}>
                {name}:
                <Spin label={name} width={44} height={13} value={freq} grey />
                <Select label={`${name} type`} width={54} value="Linkwitz Riley" />
                <Select label={`${name} slope`} width={34} value="-24dB" />
              </StyledFilterRow>
            ))}
        </StyledFilterBox>
        <StyledBandBox>
          <StyledBands>
            <thead>
              <tr>
                <th />
                <th>Type</th>
                <th>Frequency</th>
                <th>Q</th>
                <th>Gain</th>
                <th />
              </tr>
            </thead>
            <tbody>
              {channel.bands.map(band => (
                <tr key={band.id}>
                  <td>{band.id}.</td>
                  <td>
                    <Select label={`Type ${band.id}`} width={43} value={band.type} />
                  </td>
                  <td>
                    <Spin label={`Frequency ${band.id}`} width={44} height={13} value={band.freq} grey />
                  </td>
                  <td>
                    <Select label={`Q ${band.id}`} width={35} value={band.q ? comma(band.q, 3) : ''} />
                  </td>
                  <td>
                    <Spin label={`Gain ${band.id}`} width={35} height={13} value={comma(band.gain, 1)} />
                  </td>
                  <td>
                    <Check checked={band.bypass} $focus={band.id === 3}>
                      Bypass
                    </Check>
                  </td>
                </tr>
              ))}
            </tbody>
          </StyledBands>
        </StyledBandBox>
      </StyledEqFrame>
      <Chart
        height={278}
        fills={activeBands(channel).map(band => ({ band, color: bandColors[band.id] }))}
        traces={[{ parts: channelParts(channel), color: '#ee1414' }]}
        cuts={
          channel.high
            ? [
                [channel.high, 'H'],
                [channel.low, 'L'],
              ]
            : []
        }
      />
    </StyledEqSide>
  </StyledChannel>
);

const App = () => (
  <>
    <GlobalStyle />
    <StyledDesk>
      <StyledColumn $top={3}>
        <AppWindow tab="Gains" temp="+33.4C" count="156">
          <Gains />
        </AppWindow>
        <AppWindow tab="In A" temp="+33.6C" count="156" markTab>
          <Channel channel={inputA} />
        </AppWindow>
        <StyledSeam />
      </StyledColumn>
      <StyledColumn $top={0}>
        <AppWindow tab="Out 2" temp="+33.6C" count="157" markTab>
          <Channel channel={out2} />
        </AppWindow>
        <StyledSeam />
        <AppWindow tab="Out 1" temp="+33.6C" count="156" markTab>
          <Channel channel={out1} />
        </AppWindow>
      </StyledColumn>
    </StyledDesk>
  </>
);

export default App;
